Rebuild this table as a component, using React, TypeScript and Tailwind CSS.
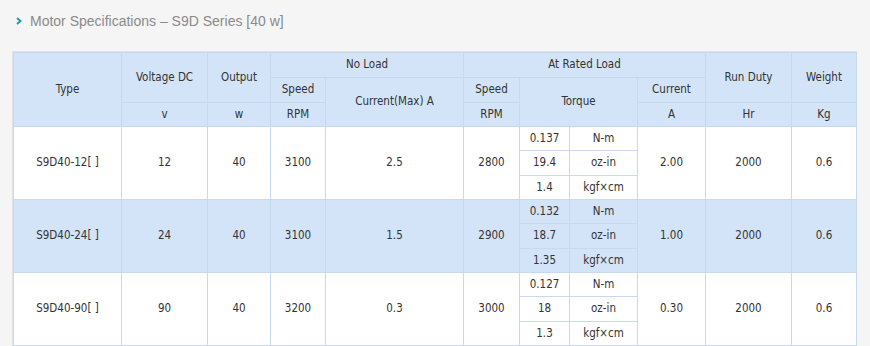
import React from 'react';

const rows = [
  { type: 'S9D40-12[ ]', volt: '12', out: '40', nlSpeed: '3100', nlCur: '2.5', rlSpeed: '2800', torque: ['0.137', '19.4', '1.4'], cur: '2.00', duty: '2000', kg: '0.6', blue: false },
  { type: 'S9D40-24[ ]', volt: '24', out: '40', nlSpeed: '3100', nlCur: '1.5', rlSpeed: '2900', torque: ['0.132', '18.7', '1.35'], cur: '1.00', duty: '2000', kg: '0.6', blue: true },
  { type: 'S9D40-90[ ]', volt: '90', out: '40', nlSpeed: '3200', nlCur: '0.3', rlSpeed: '3000', torque: ['0.127', '18', '1.3'], cur: '0.30', duty: '2000', kg: '0.6', blue: false },
];

const units = ['N-m', 'oz-in', 'kgf×cm'];
const widths = [108, 86, 63, 55, 138, 56, 50, 68, 68, 86, 65];

const cell = 'border border-[#c6d9f0] text-center align-middle p-0';

export default function App() {
  return (
    <div className="min-h-screen bg-[#f5f5f5] px-[12px] pt-[12px]" style={{ fontFamily: 'Tahoma, "DejaVu Sans Condensed", "DejaVu Sans", sans-serif' }}>
      <h2 className="flex items-center gap-[8px] pl-[4px] text-[14px] text-[#8a8a8a] font-['Liberation_Sans',Arial,sans-serif] leading-[18px]">
        <svg width="6" height="8" viewBox="0 0 6 8" className="shrink-0">
          <path d="M1 1 L4.5 4 L1 7" stroke="#13a3ab" strokeWidth="2" fill="none" />
        </svg>
        Motor Specifications – S9D Series [40 w]
      </h2>
      <div className="mt-[21px] w-[845px] border border-[#e2e2e2]">
        <table className="table-fixed border-collapse w-[843px] text-[11.5px] text-[#333]">
          <colgroup>
            {widths.map((w, i) => (
              <col key={i} style={{ width: w }} />
            ))}
          </colgroup>
          <thead className="bg-[#d3e4f8]">
            <tr className="h-[25px]">
              <th rowSpan={3} className={`${cell} font-normal`}>Type</th>
              <th rowSpan={2} className={`${cell} font-normal`}>Voltage DC</th>
              <th rowSpan={2} className={`${cell} font-normal`}>Output</th>
              <th colSpan={2} className={`${cell} font-normal`}>No Load</th>
              <th colSpan={4} className={`${cell} font-normal`}>At Rated Load</th>
              <th rowSpan={2} className={`${cell} font-normal`}>Run Duty</th>
              <th rowSpan={2} className={`${cell} font-normal`}>Weight</th>
            </tr>
            <tr className="h-[25px]">
              <th className={`${cell} font-normal`}>Speed</th>
              <th rowSpan={2} className={`${cell} font-normal`}>Current(Max) A</th>
              <th className={`${cell} font-normal`}>Speed</th>
              <th rowSpan={2} colSpan={2} className={`${cell} font-normal`}>Torque</th>
              <th className={`${cell} font-normal`}>Current</th>
            </tr>
            <tr className="h-[24px]">
              <th className={`${cell} font-normal`}>v</th>
              <th className={`${cell} font-normal`}>w</th>
              <th className={`${cell} font-normal`}>RPM</th>
              <th className={`${cell} font-normal`}>RPM</th>
              <th className={`${cell} font-normal`}>A</th>
              <th className={`${cell} font-normal`}>Hr</th>
              <th className={`${cell} font-normal`}>Kg</th>
            </tr>
          </thead>
          <tbody>
            {rows.map((r) => (
              <React.Fragment key={r.type}>
                {[0, 1, 2].map((k) => (
                  <tr key={k} className={`${k === 1 ? 'h-[25px]' : 'h-[24px]'} ${r.blue ? 'bg-[#d3e4f8]' : 'bg-white'}`}>
                    {k === 0 && (
                      <>
                        <td rowSpan={3} className={cell}>{r.type}</td>
                        <td rowSpan={3} className={cell}>{r.volt}</td>
                        <td rowSpan={3} className={cell}>{r.out}</td>
                        <td rowSpan={3} className={cell}>{r.nlSpeed}</td>
                        <td rowSpan={3} className={cell}>{r.nlCur}</td>
                        <td rowSpan={3} className={cell}>{r.rlSpeed}</td>
                      </>
                    )}
                    <td className={cell}>{r.torque[k]}</td>
                    <td className={cell}>{units[k]}</td>
                    {k === 0 && (
                      <>
                        <td rowSpan={3} className={cell}>{r.cur}</td>
                        <td rowSpan={3} className={cell}>{r.duty}</td>
                        <td rowSpan={3} className={cell}>{r.kg}</td>
                      </>
                    )}
                  </tr>
                ))}
              </React.Fragment>
            ))}
          </tbody>
        </table>
      </div>
    </div>
  );
}
